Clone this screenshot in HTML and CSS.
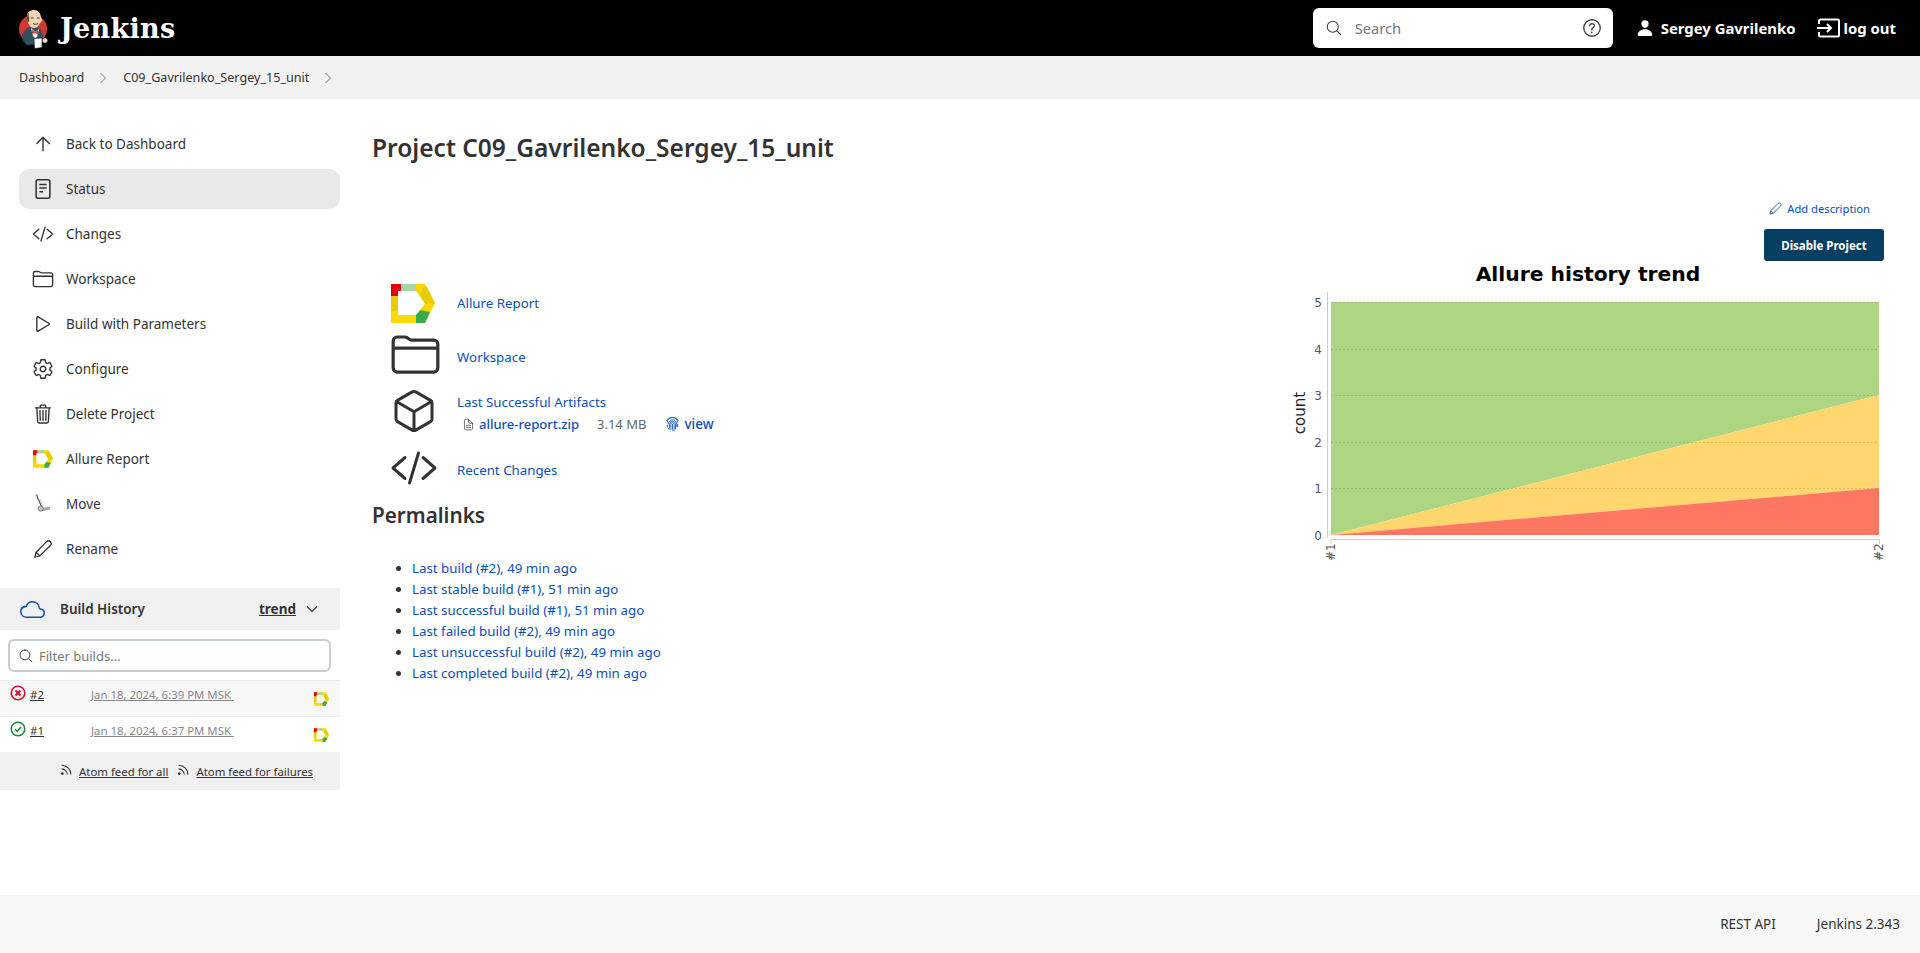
FILE: index.html
```html
<!DOCTYPE html>
<html lang="en">
<head>
<meta charset="utf-8">
<title>C09_Gavrilenko_Sergey_15_unit [Jenkins]</title>
<link rel="stylesheet" href="styles.css">
</head>
<body>
<svg class="defs" width="0" height="0" aria-hidden="true">
  <symbol id="allure" viewBox="0 0 44 39">
    <polygon fill="#ffd800" points="0,0 34,0 44,19.5 34,39 0,39 0,0 7,7 7,31 25,31 34,19.5 25,7 7,7"/>
    <polygon fill="#e60012" points="0,0 10,0 10,7 7,7 7,12 0,12"/>
    <polygon fill="#a8d5a2" points="10,0 25,0 25,7 10,7"/>
    <polygon fill="#e6cc00" points="0,12 7,12 7,27 0,27"/>
    <polygon fill="#e6cc00" points="32,3 36,3 44,19.5 34,19.500 28.500,11.500"/>
    <polygon fill="#3aaa4a" points="25,31 29.500,26 39,28 34,39 25,39"/>
  </symbol>
  <symbol id="ic-code" viewBox="0 0 512 512"><path class="ln" d="M160 368L32 256l128-112M352 368l128-112-128-112M304 96l-96 320"/></symbol>
  <symbol id="ic-folder" viewBox="0 0 512 512"><path class="ln" d="M440 432H72a40 40 0 01-40-40V120a40 40 0 0140-40h75.89a40 40 0 0122.19 6.72l27.84 18.56a40 40 0 0022.19 6.72H440a40 40 0 0140 40v240a40 40 0 01-40 40zM32 192h448"/></symbol>
  <symbol id="ic-cube" viewBox="0 0 512 512"><path class="ln" d="M448 341.37V170.61A32 32 0 00432.11 143l-152-88.46a47.94 47.94 0 00-48.24 0L79.89 143A32 32 0 0064 170.61v170.76A32 32 0 0079.89 369l152 88.46a48 48 0 0048.24 0l152-88.46A32 32 0 00448 341.37zM69 153.99l187 110 187-110M256 463.99v-200"/></symbol>
  <symbol id="ic-pencil" viewBox="0 0 24 24"><path d="M3 21l1.500-5.500L16 4a2.900 2.900 0 0 1 4.100 4.100L8.500 19.500zM4.500 15.500l4 4" fill="none" stroke="currentColor" stroke-width="1.400" stroke-linejoin="round"/></symbol>
  <symbol id="ic-rss" viewBox="0 0 16 16"><circle cx="2.800" cy="13" r="1.700" fill="currentColor"/><path d="M2 7.200a7 7 0 0 1 7 7M2 2.800a11.400 11.400 0 0 1 11.400 11.400" fill="none" stroke="currentColor" stroke-width="1.300"/></symbol>
</svg>

<header class="topbar">
  <a class="brand" href="#">
    <svg class="brand-logo" viewBox="0 0 30 40" width="30" height="40">
      <circle cx="15" cy="19" r="14" fill="#d33833"/>
      <path d="M4 26C5 21 9 18 12 17l9 1c3 2 4 6 4 10l-2 6-14 1-4-4z" fill="#335061"/>
      <path d="M13 18l4 4 4-3-2 8-2 1-2-2z" fill="#fff"/>
      <path d="M14 20l3 2 3-2v4l-3-1-3 1z" fill="#d33833"/>
      <path d="M9 7C9 2 12 0 16 0s7 3 7 8c1 0 1.500 2 .5 3.500S22 13 22 13c-1 3-3.500 5-6 5-3 0-5.500-3-6-6-1-1-1.500-4-1-5z" fill="#f0d6b7"/>
      <path d="M9 7c0-2 .8-3.500 2-4.500-.5 2-.6 4 .4 5.500-.3 1.500-.2 2.500 0 3.500l-1.400.5c-1-1-1.500-4-1-5z" fill="#5a4634"/>
      <path d="M13 8h2.500M19 8h2.500M15 13.500c1.500 1 3.500 1 5 0" fill="none" stroke="#3a2a20" stroke-width="1"/>
      <path d="M16 28.500l8-.5v9.500l-7.500 1z" fill="#fff" stroke="#111" stroke-width=".6"/>
      <circle cx="27" cy="30.500" r="2.600" fill="#f4e6d4" stroke="#111" stroke-width=".5"/>
    </svg>
    <span class="brand-name">Jenkins</span>
  </a>
  <div class="top-right">
    <label class="searchbox">
      <svg class="sb-icon" viewBox="0 0 512 512"><path class="ln" d="M221.09 64a157.09 157.09 0 10157.09 157.09A157.1 157.1 0 00221.09 64zM338.29 338.29L448 448"/></svg>
      <span class="sb-text">Search</span>
      <svg class="sb-help" viewBox="0 0 512 512"><path class="ln" d="M256 64a192 192 0 10192 192A192 192 0 00256 64zM200 202.29s.84-17.5 19.57-32.57C230.68 160.77 244 158.18 256 158c10.93-.14 20.69 1.67 26.53 4.45 10 4.76 29.47 16.38 29.47 41.09 0 26-17 37.81-36.37 50.8S252 285.75 252 304"/><circle cx="250" cy="356" r="20" fill="currentColor"/></svg>
    </label>
    <a class="top-link user" href="#">
      <svg class="top-ic" viewBox="0 0 512 512"><path fill="currentColor" d="M332.64 64.58C313.18 43.57 286 32 256 32c-30.16 0-57.43 11.5-76.8 32.38-19.58 21.11-29.12 49.8-26.88 80.78C156.76 206.28 203.27 256 256 256s99.16-49.71 103.67-110.82c2.27-30.7-7.33-59.33-27.03-80.6zM432 480H80a31 31 0 01-24.2-11.13c-6.5-7.77-9.12-18.38-7.18-29.11C57.06 392.94 83.4 353.61 124.8 326c36.78-24.51 83.37-38 131.2-38s94.42 13.5 131.2 38c41.4 27.6 67.74 66.93 76.18 113.75 1.94 10.73-.68 21.34-7.18 29.11A31 31 0 01432 480z"/></svg>
      Sergey Gavrilenko
    </a>
    <a class="top-link logout" href="#">
      <svg class="top-ic-out" viewBox="0 0 24 20"><path d="M3 6V3a1.500 1.500 0 0 1 1.500-1.500h17A1.500 1.500 0 0 1 23 3v14a1.500 1.500 0 0 1-1.500 1.500h-17A1.500 1.500 0 0 1 3 17v-3M1 10h14M11 6l4 4-4 4" fill="none" stroke="currentColor" stroke-width="2"/></svg>
      log out
    </a>
  </div>
</header>

<nav class="crumbs">
  <a href="#">Dashboard</a>
  <svg class="chev" viewBox="0 0 8 12"><path d="M1.500 1l5 5-5 5"/></svg>
  <a href="#">C09_Gavrilenko_Sergey_15_unit</a>
  <svg class="chev" viewBox="0 0 8 12"><path d="M1.500 1l5 5-5 5"/></svg>
</nav>

<div class="page">
  <aside class="side">
    <ul class="tasks">
      <li class="task"><span class="tk-ic"><svg viewBox="0 0 512 512"><path class="ln" d="M112 244l144-144 144 144M256 120v292"/></svg></span>Back to Dashboard</li>
      <li class="task active"><span class="tk-ic"><svg viewBox="0 0 24 24"><rect x="4.500" y="2" width="15" height="20" rx="2" fill="none" stroke="currentColor" stroke-width="1.700"/><path d="M8 7h8M8 11h8M8 15h4" stroke="currentColor" stroke-width="1.700"/></svg></span>Status</li>
      <li class="task"><span class="tk-ic"><svg><use href="#ic-code"/></svg></span>Changes</li>
      <li class="task"><span class="tk-ic"><svg><use href="#ic-folder"/></svg></span>Workspace</li>
      <li class="task"><span class="tk-ic"><svg viewBox="0 0 512 512"><path class="ln" d="M112 111v290c0 17.44 17 28.52 31 20.160l247.900-148.370c12.120-7.250 12.120-26.330 0-33.580L143 90.840c-14-8.360-31 2.720-31 20.160z"/></svg></span>Build with Parameters</li>
      <li class="task"><span class="tk-ic"><svg viewBox="0 0 512 512"><path class="ln" d="M262.29 192.31a64 64 0 1057.4 57.4 64.13 64.13 0 00-57.4-57.4zM416.39 256a154.34 154.34 0 01-1.53 20.79l45.21 35.46a10.81 10.81 0 012.45 13.75l-42.77 74a10.81 10.81 0 01-13.14 4.59l-44.9-18.08a16.11 16.11 0 00-15.17 1.75A164.48 164.48 0 01325 400.8a15.94 15.94 0 00-8.82 12.14l-6.73 47.89a11.08 11.08 0 01-10.68 9.17h-85.54a11.11 11.11 0 01-10.69-8.87l-6.72-47.82a16.07 16.07 0 00-9-12.22 155.3 155.3 0 01-21.46-12.57 16 16 0 00-15.11-1.71l-44.89 18.07a10.81 10.81 0 01-13.14-4.58l-42.77-74a10.8 10.8 0 012.45-13.75l38.21-30a16.05 16.05 0 006-14.08c-.36-4.17-.58-8.33-.58-12.5s.21-8.27.58-12.35a16 16 0 00-6.07-13.94l-38.19-30A10.81 10.81 0 0149.48 186l42.77-74a10.81 10.81 0 0113.14-4.59l44.9 18.08a16.11 16.11 0 0015.17-1.75A164.48 164.48 0 01187 111.2a15.94 15.94 0 008.82-12.14l6.73-47.89A11.08 11.08 0 01213.23 42h85.54a11.11 11.11 0 0110.69 8.87l6.72 47.82a16.07 16.07 0 009 12.22 155.3 155.3 0 0121.46 12.57 16 16 0 0015.11 1.71l44.89-18.07a10.81 10.81 0 0113.14 4.58l42.77 74a10.8 10.8 0 01-2.45 13.75l-38.21 30a16.05 16.05 0 00-6.05 14.08c.33 4.14.55 8.3.55 12.47z"/></svg></span>Configure</li>
      <li class="task"><span class="tk-ic"><svg viewBox="0 0 512 512"><path class="ln" d="M112 112l20 320c.95 18.49 14.4 32 32 32h184c17.67 0 30.87-13.51 32-32l20-320M80 112h352M192 112V72h0a23.93 23.93 0 0124-24h80a23.93 23.93 0 0124 24h0v40M256 176v224M184 176l8 224M328 176l-8 224"/></svg></span>Delete Project</li>
      <li class="task"><span class="tk-ic"><svg class="ic-allure"><use href="#allure"/></svg></span>Allure Report</li>
      <li class="task"><span class="tk-ic"><svg viewBox="0 0 24 24"><path d="M3.500 1.500l3 .5-1 2.500z" fill="#d8454a"/><path d="M5.500 3.500L10.500 15" stroke="#555" stroke-width="1.300"/><path d="M8.500 6L12 14" stroke="#ccc" stroke-width="1"/><path d="M9 15l3 1 8-1-.5 3-9 2z" fill="#a8a8a0"/><circle cx="9.500" cy="17" r="2.800" fill="#c4c4bc" stroke="#666" stroke-width=".8"/></svg></span>Move</li>
      <li class="task"><span class="tk-ic"><svg><use href="#ic-pencil"/></svg></span>Rename</li>
    </ul>

    <section class="history">
      <div class="hist-head">
        <svg class="cloud" viewBox="0 0 512 512"><path class="ln" d="M400 240c-8.890-89.540-71-144-144-144-69 0-113.440 48.200-128 96-60 6-112 43.590-112 112 0 66 54 112 120 112h260c55 0 100-27.440 100-88 0-59.820-53-85.760-96-88z"/></svg>
        <span class="hist-title">Build History</span>
        <a class="trend" href="#">trend</a>
        <svg class="hist-chev" viewBox="0 0 12 8"><path d="M1 1.500l5 5 5-5"/></svg>
      </div>
      <div class="filter-wrap">
        <label class="filter">
          <svg class="filter-ic" viewBox="0 0 512 512"><path class="ln" d="M221.09 64a157.09 157.09 0 10157.09 157.09A157.1 157.1 0 00221.09 64zM338.29 338.29L448 448"/></svg>
          <span>Filter builds...</span>
        </label>
      </div>
      <div class="build odd">
        <svg class="st" viewBox="0 0 16 16"><circle cx="8" cy="8" r="6.800" fill="none" stroke="#dc0d2e" stroke-width="1.600"/><path d="M5.500 5.500l5 5M10.500 5.500l-5 5" stroke="#dc0d2e" stroke-width="2"/></svg>
        <a class="bnum" href="#">#2</a>
        <a class="bdate" href="#">Jan 18, 2024, 6:39 PM MSK&nbsp;</a>
        <svg class="bal"><use href="#allure"/></svg>
      </div>
      <div class="build">
        <svg class="st" viewBox="0 0 16 16"><circle cx="8" cy="8" r="6.800" fill="none" stroke="#138a3c" stroke-width="1.500"/><path d="M5 8.300l2.200 2.200L11 6" fill="none" stroke="#138a3c" stroke-width="1.500"/></svg>
        <a class="bnum" href="#">#1</a>
        <a class="bdate" href="#">Jan 18, 2024, 6:37 PM MSK&nbsp;</a>
        <svg class="bal"><use href="#allure"/></svg>
      </div>
      <div class="feeds">
        <svg class="rss"><use href="#ic-rss"/></svg><a href="#">Atom feed for all</a>
        <svg class="rss second"><use href="#ic-rss"/></svg><a href="#">Atom feed for failures</a>
      </div>
    </section>
  </aside>

  <main class="main">
    <h1 class="title">Project C09_Gavrilenko_Sergey_15_unit</h1>
    <div class="columns">
      <div class="left">
        <div class="row r1">
          <svg class="allure-big"><use href="#allure"/></svg>
          <a href="#">Allure Report</a>
        </div>
        <div class="row r2">
          <svg class="folder-big"><use href="#ic-folder"/></svg>
          <a href="#">Workspace</a>
        </div>
        <div class="row r3">
          <svg class="big"><use href="#ic-cube"/></svg>
          <div class="artifacts">
            <a href="#">Last Successful Artifacts</a>
            <div class="artifact">
              <svg class="file" viewBox="0 0 512 512"><path class="ln" d="M416 221.250V416a48 48 0 01-48 48H144a48 48 0 01-48-48V96a48 48 0 0148-48h98.750a32 32 0 0122.620 9.370l141.260 141.260a32 32 0 019.370 22.620zM256 56v120a32 32 0 0032 32h120M176 288h160M176 368h160"/></svg>
              <a class="zip" href="#">allure-report.zip</a>
              <span class="size">3.14 MB</span>
              <svg class="finger" viewBox="0 0 16 16"><path d="M2.500 6a5.500 5.500 0 0 1 11 0M1.500 4.200A7.500 7.500 0 0 1 14.500 4.200M3.500 7.500a4.500 4.500 0 0 1 9 0v3M2.500 8v3M4.800 12V7.800a3.200 3.200 0 0 1 6.400 0V13M6.200 14V7.800a1.800 1.800 0 0 1 3.600 0V14.500M8 7.500V13c0 1 .5 1.500 1 2M13.500 7.500V11M3.500 11.500l1 2"/></svg>
              <a class="view" href="#">view</a>
            </div>
          </div>
        </div>
        <div class="row r4">
          <svg class="big"><use href="#ic-code"/></svg>
          <a href="#">Recent Changes</a>
        </div>
        <h2 class="perma">Permalinks</h2>
        <ul class="links">
          <li><a href="#">Last build (#2), 49 min ago</a></li>
          <li><a href="#">Last stable build (#1), 51 min ago</a></li>
          <li><a href="#">Last successful build (#1), 51 min ago</a></li>
          <li><a href="#">Last failed build (#2), 49 min ago</a></li>
          <li><a href="#">Last unsuccessful build (#2), 49 min ago</a></li>
          <li><a href="#">Last completed build (#2), 49 min ago</a></li>
        </ul>
      </div>
      <div class="right">
        <a class="add-desc" href="#"><svg class="pen"><use href="#ic-pencil"/></svg>Add description</a>
        <button class="disable" type="button">Disable Project</button>
        <svg class="chart" viewBox="0 -10 600 310" width="600" height="310">
          <polygon fill="#aed581" points="41,37 589,37 589,130 41,270"/>
          <polygon fill="#ffd76e" points="41,270 589,130 589,223"/>
          <polygon fill="#ff7663" points="41,270 589,223 589,270"/>
          <g class="grid">
            <path d="M41 37.500H589M41 84.500H589M41 130.500H589M41 177.500H589M41 223.500H589"/>
          </g>
          <path class="axis" d="M37.500 27V273M41 274.500H590M41 274V279M589.500 274V279"/>
          <text class="c-title" x="298" y="16" text-anchor="middle">Allure history trend</text>
          <text class="c-label" transform="translate(15 148) rotate(-90)" text-anchor="middle">count</text>
          <g class="c-tick" text-anchor="end">
            <text x="32" y="42">5</text>
            <text x="32" y="89">4</text>
            <text x="32" y="135">3</text>
            <text x="32" y="182">2</text>
            <text x="32" y="228">1</text>
            <text x="32" y="275">0</text>
          </g>
          <text class="c-tick" transform="translate(45 296) rotate(-90)">#1</text>
          <text class="c-tick" transform="translate(593 296) rotate(-90)">#2</text>
        </svg>
      </div>
    </div>
  </main>
</div>

<footer class="foot">
  <a href="#">REST API</a>
  <a href="#">Jenkins 2.343</a>
</footer>
</body>
</html>
```
FILE: styles.css
```css
* { box-sizing: border-box; }
html, body { margin: 0; height: 100%; }
body {
  display: flex;
  flex-direction: column;
  min-height: 953px;
  font-family: "Noto Sans", "Open Sans", sans-serif;
  font-size: 13.5px;
  color: #333;
  background: #fff;
}
a { color: inherit; text-decoration: none; }
.defs { position: absolute; }
.ln { fill: none; stroke: currentColor; stroke-width: 32; stroke-linecap: round; stroke-linejoin: round; }

.topbar {
  height: 56px;
  flex: none;
  background: #000;
  color: #fff;
  display: flex;
  align-items: center;
  justify-content: space-between;
  padding: 0 24px 0 18px;
}
.brand { display: flex; align-items: center; gap: 12px; }
.brand-logo { display: block; margin-top: 3px; }
.brand-name { font-family: "DejaVu Serif", "Liberation Serif", serif; font-weight: 700; font-size: 27px; letter-spacing: .3px; }
.top-right { display: flex; align-items: center; }
.searchbox {
  width: 300px;
  height: 40px;
  background: #fff;
  border-radius: 6px;
  color: #777;
  display: flex;
  align-items: center;
  padding: 0 10px 0 12px;
  font-size: 14.700px;
}
.sb-icon { width: 18px; height: 18px; color: #444; margin-right: 12px; }
.sb-text { flex: 1; }
.sb-help { width: 22px; height: 22px; color: #444; }
.top-link { display: flex; align-items: center; font-weight: 700; font-size: 14.900px; }
.user { margin-left: 23px; gap: 7px; }
.top-ic { width: 18px; height: 18px; }
.logout { margin-left: 20px; gap: 4px; }
.top-ic-out { width: 24px; height: 20px; }

.crumbs {
  height: 43px;
  flex: none;
  background: #f2f2f2;
  display: flex;
  align-items: center;
  padding-left: 19px;
  font-size: 12.600px;
}
.chev { width: 8px; height: 12px; margin: 0 16px 0 15px; fill: none; stroke: #777; stroke-width: 1; }

.page { flex: 1; display: flex; min-height: 0; }
.side { width: 340px; flex: none; padding-top: 25px; }
.tasks { list-style: none; margin: 0; padding: 0 0 0 19px; display: flex; flex-direction: column; gap: 5px; }
.task {
  height: 40px;
  display: flex;
  align-items: center;
  border-radius: 10px;
  padding-left: 13px;
}
.task.active { background: #e9e9e9; }
.tk-ic { width: 22px; height: 22px; margin-right: 12px; display: flex; align-items: center; justify-content: center; color: #333; }
.tk-ic svg { width: 22px; height: 22px; display: block; }
.tk-ic .ic-allure { width: 20px; height: 18px; }

.history { margin-top: 19px; }
.hist-head {
  height: 42px;
  background: #f0f0f0;
  display: flex;
  align-items: center;
  padding-left: 20px;
  font-weight: 600;
}
.cloud { width: 25px; height: 25px; color: #0b4fb8; margin-right: 15px; }
.hist-title { flex: 1; color: #333; }
.trend { text-decoration: underline; font-weight: 700; margin-right: 10px; }
.hist-chev { width: 12px; height: 8px; fill: none; stroke: #333; stroke-width: 1.200; margin-right: 22px; }
.filter-wrap { padding: 9px 9px 8px 8px; }
.filter {
  height: 33px;
  border: 2px solid #c6ced4;
  border-radius: 6px;
  display: flex;
  align-items: center;
  padding-left: 8px;
  gap: 5px;
  color: #777;
  font-size: 13px;
}
.filter-ic { width: 16px; height: 16px; color: #444; }
.build {
  height: 36px;
  display: flex;
  border-top: 1px solid #eee;
  font-size: 11.600px;
  padding: 4px 0 0 10px;
}
.build.odd { background: #f8f8f8; }
.st { width: 16px; height: 16px; margin-right: 4px; }
.bnum { width: 61px; text-decoration: underline; line-height: 17px; margin-top: 1px; }
.bdate { width: 223px; font-size: 11.400px; text-decoration: underline; color: #888; line-height: 17px; margin-top: 1px; }
.bal { width: 15px; height: 14px; margin-top: 7px; }
.feeds {
  height: 38px;
  background: #f0f0f0;
  display: flex;
  align-items: center;
  padding-left: 60px;
  font-size: 11.400px;
}
.feeds a { text-decoration: underline; }
.rss { width: 13px; height: 13px; margin: -4px 6px 0 0; }
.rss.second { margin-left: 9px; }

.main { flex: 1; min-width: 0; padding: 0 30px 0 32px; }
.title { margin: 32px 0 0; height: 68px; font-size: 24.500px; font-weight: 600; line-height: 34px; color: #333; }
.columns { display: flex; justify-content: space-between; }
.left { padding-top: 77px; font-size: 13.300px; }
.row { display: flex; align-items: center; color: #0b4fb8; }
.r1, .r2 { height: 54px; }
.r3 { height: 58px; }
.r4 { height: 56px; }
.big { width: 48px; height: 48px; color: #333; margin: 0 19.500px 4px 17.500px; flex: none; }
.folder-big { width: 51px; height: 51px; color: #333; margin: 0 16.500px 6px 17.500px; flex: none; }
.allure-big { width: 44px; height: 39px; margin: 0 22px 0 19px; flex: none; }
.artifacts { display: flex; flex-direction: column; gap: 4px; }
.artifact { display: flex; align-items: center; padding-left: 5px; }
.file { width: 13px; height: 15px; color: #555; margin-right: 4px; }
.zip { font-weight: 500; font-size: 13px; }
.size { color: #666; font-size: 13px; margin: 0 19px 0 18px; }
.finger { width: 15px; height: 15px; fill: none; stroke: #0b4fb8; stroke-width: .9; margin-right: 4px; }
.view { font-weight: 500; font-size: 13.500px; }
.perma { margin: 0; padding-top: 3px; font-size: 20.700px; font-weight: 600; color: #333; line-height: 28px; }
.links { margin: 29px 0 0; padding-left: 40px; color: #333; }
.links li { height: 21px; line-height: 21px; }
.links a { color: #0b4fb8; }

.right { display: flex; flex-direction: column; align-items: flex-end; }
.add-desc { color: #0b4fb8; font-size: 11.200px; display: flex; align-items: center; gap: 4px; margin: 0 20px 0 0; height: 18px; }
.pen { width: 15px; height: 15px; }
.disable {
  width: 120px;
  height: 32px;
  margin: 12px 6px 0 0;
  background: #073f62;
  color: #fff;
  border: 0;
  border-radius: 3px;
  font: 700 11.500px "Noto Sans", sans-serif;
}
.chart { display: block; margin-top: -6px; }
.grid path { fill: none; stroke: #000; stroke-opacity: .12; stroke-dasharray: 2 2; }
.axis { fill: none; stroke: #ccc; }
.c-title { font: 700 20.300px "DejaVu Sans", sans-serif; fill: #000; }
.c-label { font: 15px "DejaVu Sans", sans-serif; fill: #222; }
.c-tick { font: 12px "DejaVu Sans", sans-serif; fill: #555; }

.foot {
  height: 58px;
  flex: none;
  background: #f8f8f8;
  display: flex;
  align-items: center;
  justify-content: flex-end;
  gap: 41px;
  padding-right: 20px;
}
```
